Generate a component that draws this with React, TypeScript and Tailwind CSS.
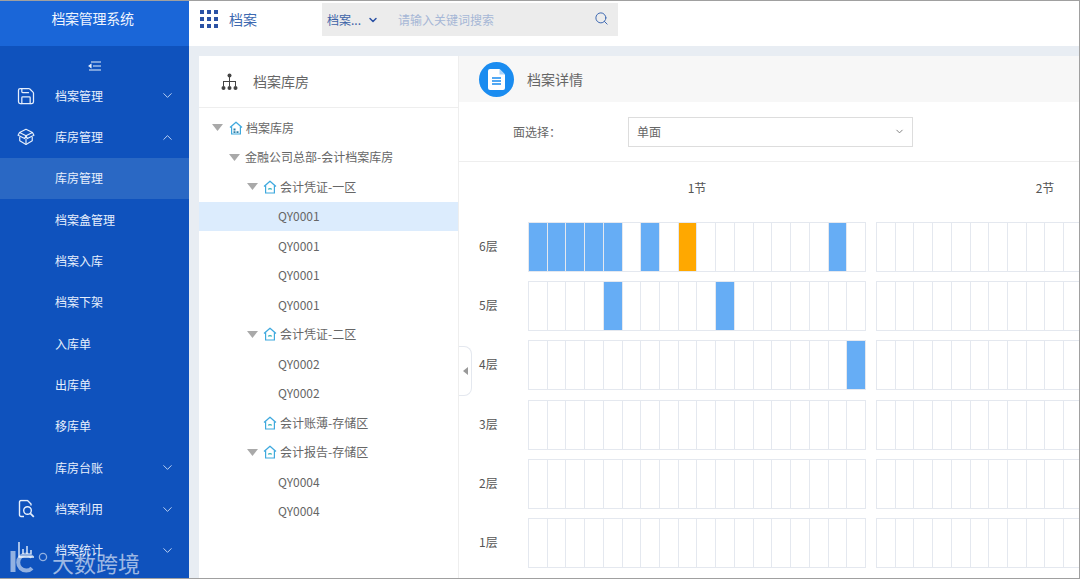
import { ChevronDown, ChevronUp, Save, Search } from "lucide-react";

const font = { fontFamily: '"Noto Sans CJK SC", "Liberation Sans", sans-serif' };

function BoxIcon() {
  return (
    <svg width="18" height="18" viewBox="0 0 17 17" fill="none" stroke="#e6effc" strokeWidth="1.1" strokeLinejoin="round">
      <path d="M8.5 1.2 14.6 4.2 8.5 7.4 2.4 4.2Z" />
      <path d="M2.4 4.2 1 6.8 7.2 10 8.5 7.4 9.8 10 16 6.8 14.6 4.2" />
      <path d="M2.6 8.4v3.7l5.9 3.4 5.9-3.4V8.4" />
      <path d="M8.5 10v5.5" />
    </svg>
  );
}

function FileFind() {
  return (
    <svg width="17" height="19" viewBox="0 0 17 19" fill="none" stroke="#e6effc" strokeWidth="1.4" strokeLinejoin="round">
      <path d="M6 17H3a1.5 1.5 0 0 1-1.5-1.5v-13A1.5 1.5 0 0 1 3 1h6.5L13 4.5V6" />
      <circle cx="9.5" cy="11" r="3.8" />
      <path d="M12.3 13.8 15.8 17.4" strokeWidth="1.7" />
    </svg>
  );
}

function ChartIcon() {
  return (
    <svg width="18" height="18" viewBox="0 0 18 18" fill="none" stroke="#e6effc" strokeWidth="1.4">
      <path d="M2 1v15h15" />
      <path d="M6 13V8M10 13V5M14 13V9" />
    </svg>
  );
}

function Tri({ wide }: { wide: boolean }) {
  return (
    <svg width="11" height="7" viewBox="0 0 11 7" className={wide ? "mr-[6px] shrink-0" : "mr-[5px] shrink-0"}>
      <path d="M0 0h11L5.5 7z" fill="#a9a9a9" />
    </svg>
  );
}

function Home({ store }: { store?: boolean }) {
  return (
    <svg width="14" height="14" viewBox="0 0 14 14" fill="none" className="shrink-0">
      <path d="M1 6.4 7 1.2l6 5.2" stroke="#3fa9de" strokeWidth="1.3" strokeLinejoin="round" />
      <path d="M2.6 5.6V13h8.8V5.6" stroke="#3fa9de" strokeWidth="1.2" />
      {store ? (
        <path d="M4.5 7.5h2v2h-2zM4.5 10.3h2v1.7h-2zM7.5 10.3h2v1.7h-2z" fill="#2d7fa8" />
      ) : (
        <path d="M5.2 9.4c1-1 2.6-1 3.6 0" stroke="#35b4b8" strokeWidth="1.3" />
      )}
    </svg>
  );
}

const nav = [
  { label: "档案管理", icon: <Save size={20} strokeWidth={1.5} color="#e6effc" />, arrow: "down" },
  { label: "库房管理", icon: <BoxIcon />, arrow: "up" },
  { label: "库房管理", active: true },
  { label: "档案盒管理" },
  { label: "档案入库" },
  { label: "档案下架" },
  { label: "入库单" },
  { label: "出库单" },
  { label: "移库单" },
  { label: "库房台账", arrow: "down" },
  { label: "档案利用", icon: <FileFind />, arrow: "down" },
  { label: "档案统计", icon: <ChartIcon />, arrow: "down" },
];

const tree = [
  { pad: "pl-[13px]", arrow: true, home: "store", text: "档案库房" },
  { pad: "pl-[30px]", arrow: true, text: "金融公司总部-会计档案库房" },
  { pad: "pl-[48px]", arrow: true, home: "plain", text: "会计凭证-一区" },
  { pad: "pl-[79px]", text: "QY0001", active: true },
  { pad: "pl-[79px]", text: "QY0001" },
  { pad: "pl-[79px]", text: "QY0001" },
  { pad: "pl-[79px]", text: "QY0001" },
  { pad: "pl-[48px]", arrow: true, home: "plain", text: "会计凭证-二区" },
  { pad: "pl-[79px]", text: "QY0002" },
  { pad: "pl-[79px]", text: "QY0002" },
  { pad: "pl-[64px]", home: "plain", text: "会计账薄-存储区" },
  { pad: "pl-[48px]", arrow: true, home: "plain", text: "会计报告-存储区" },
  { pad: "pl-[79px]", text: "QY0004" },
  { pad: "pl-[79px]", text: "QY0004" },
];

const floors: { label: string; blue: number[]; orange: number[] }[] = [
  { label: "6层", blue: [0, 1, 2, 3, 4, 6, 16], orange: [8] },
  { label: "5层", blue: [4, 10], orange: [] },
  { label: "4层", blue: [17], orange: [] },
  { label: "3层", blue: [], orange: [] },
  { label: "2层", blue: [], orange: [] },
  { label: "1层", blue: [], orange: [] },
];

const cells = Array.from({ length: 18 }, (_, i) => i);

function Bay({ blue = [], orange = [] }: { blue?: number[]; orange?: number[] }) {
  return (
    <div className="flex h-[50px] w-[338px] shrink-0 border border-[#e4e8ef] bg-white">
      {cells.map((i) => (
        <div
          key={i}
          className={
            "flex-1 border-r border-[#e4e8ef] last:border-r-0 " +
            (blue.includes(i) ? "bg-[#66adf5]" : orange.includes(i) ? "bg-[#ffa800]" : "")
          }
        />
      ))}
    </div>
  );
}

export default function App() {
  return (
    <div style={font} className="relative flex h-[579px] w-[1080px] overflow-hidden border-y border-r border-[#a0a0a0] bg-[#e8edf3]">
      <aside className="flex w-[189px] shrink-0 flex-col bg-[#0f52bd] text-[12px] text-[#e6effc]">
        <div className="flex h-[45px] items-center justify-center bg-[#1a66d8] pb-[10px] pr-[4px] text-[14px] tracking-[-0.3px] text-[#eef4fe]">
          档案管理系统
        </div>
        <div className="flex h-[26px] items-end justify-center pb-px">
          <svg width="13" height="10" viewBox="0 0 13 10" stroke="#e6effc" strokeWidth="1.1">
            <path d="M3 1h10M5 5h8M1 9h12" />
            <path d="M3 3.5 1 5l2 1.5z" fill="#e6effc" />
          </svg>
        </div>
        <nav className="flex flex-col pt-[3px]">
          {nav.map((n, i) => (
            <div
              key={i}
              className={"relative flex h-[41.35px] items-center pl-[55px] " + (n.active ? "bg-[#2a68c4]" : "")}
            >
              {n.icon && (
                <span className="absolute left-[16px] top-1/2 flex w-[20px] -translate-y-1/2 items-center justify-center">
                  {n.icon}
                </span>
              )}
              <span>{n.label}</span>
              {n.arrow === "down" && (
                <ChevronDown size={15} strokeWidth={1.5} color="#c4d7f5" className="absolute left-[160px]" />
              )}
              {n.arrow === "up" && (
                <ChevronUp size={15} strokeWidth={1.5} color="#c4d7f5" className="absolute left-[160px]" />
              )}
            </div>
          ))}
        </nav>
      </aside>

      <main className="flex min-w-0 flex-1 flex-col">
        <header className="flex h-[45px] shrink-0 items-start bg-white">
          <div className="ml-[11px] mt-[9px] grid grid-cols-3 gap-[3px]">
            {Array.from({ length: 9 }, (_, i) => (
              <span key={i} className="h-[4px] w-[4px] bg-[#2b52a5]" />
            ))}
          </div>
          <span className="ml-[11px] mt-[7px] text-[14px] leading-[22px] text-[#3d69b0]">档案</span>
          <div className="ml-[65px] mt-[2px] flex h-[33px] w-[296px] items-center bg-[#ececec] text-[12px]">
            <span className="ml-[5px] text-[#3d63a8]">档案...</span>
            <ChevronDown size={12} strokeWidth={3} color="#2b52a5" className="ml-[6px]" />
            <span className="ml-[19px] text-[#a6b7d6]">请输入关键词搜索</span>
            <Search size={15} strokeWidth={1.6} color="#3f6ab3" className="ml-auto mr-[9px] -translate-y-px" />
          </div>
        </header>

        <div className="ml-[10px] mt-[10px] flex min-h-0 flex-1">
          <section className="flex w-[259px] shrink-0 flex-col bg-white">
            <div className="flex h-[52px] shrink-0 items-center border-b border-[#eeeeee] pl-[22px] text-[14px] text-[#666666]">
              <svg width="17" height="18" viewBox="0 0 17 18" fill="#444444">
                <circle cx="8.5" cy="2.5" r="2" />
                <path d="M8 4h1v4h6v5h-1V9H9v4H8V9H3v4H2V8h6z" />
                <circle cx="2.5" cy="15" r="2" />
                <circle cx="8.5" cy="15" r="2" />
                <circle cx="14.5" cy="15" r="2" />
              </svg>
              <span className="ml-[15px]">档案库房</span>
            </div>
            <div className="pt-[5px] text-[12px] text-[#666666]">
              {tree.map((t, i) => (
                <div
                  key={i}
                  className={"flex h-[29.5px] items-center " + t.pad + (t.active ? " bg-[#dcecfd]" : "")}
                >
                  {t.arrow && <Tri wide={t.home === "store"} />}
                  {t.home && <Home store={t.home === "store"} />}
                  <span className={t.home ? "ml-[3px]" : ""}>{t.text}</span>
                </div>
              ))}
            </div>
          </section>

          <section className="relative min-w-0 flex-1 overflow-hidden border-l border-[#eeeeee] bg-white">
            <div className="flex h-[46px] items-center bg-[#f7f7f7] pl-[20px] text-[14px] text-[#666666]">
              <span className="flex h-[35px] w-[35px] items-center justify-center rounded-full bg-[#1a8cf0]">
                <svg width="17" height="21" viewBox="0 0 17 21">
                  <path d="M2 0h9.5L17 5.5V19a2 2 0 0 1-2 2H2a2 2 0 0 1-2-2V2a2 2 0 0 1 2-2z" fill="#ffffff" />
                  <path d="M11.5 0 17 5.5h-5.5z" fill="#a9d3fa" />
                  <path d="M4 9h9M4 12h9M4 15h9" stroke="#1a8cf0" strokeWidth="1.4" />
                </svg>
              </span>
              <span className="ml-[13px]">档案详情</span>
            </div>
            <div className="flex h-[60px] items-center border-b border-[#eeeeee] text-[12px] text-[#666666]">
              <span className="ml-[54px] w-[115px]">面选择：</span>
              <div className="flex h-[30px] w-[285px] items-center justify-between border border-[#dddddd] pl-[8px] pr-[7px]">
                <span>单面</span>
                <ChevronDown size={11} strokeWidth={2} color="#777777" />
              </div>
            </div>
            <div className="flex h-[60px] items-center pb-[9px] pl-[69px] text-[12px] text-[#555555]">
              <span className="w-[348px] shrink-0 pr-[10px] text-center">1节</span>
              <span className="w-[338px] shrink-0 text-center">2节</span>
            </div>
            <div className="flex flex-col gap-[9.2px]">
              {floors.map((f) => (
                <div key={f.label} className="flex items-center">
                  <span className="ml-[20px] w-[49px] shrink-0 -translate-y-px whitespace-nowrap text-[12px] text-[#555555]">{f.label}</span>
                  <div className="flex gap-[10px]">
                    <Bay blue={f.blue} orange={f.orange} />
                    <Bay />
                  </div>
                </div>
              ))}
            </div>
            <div className="absolute left-0 top-[290px] flex h-[50px] w-[13px] items-center justify-center rounded-r-[8px] border border-l-0 border-[#e4e8ef] bg-white">
              <svg width="5" height="8" viewBox="0 0 5 8"><path d="M5 0v8L0 4z" fill="#999999" /></svg>
            </div>
          </section>
        </div>
      </main>

      <div className="pointer-events-none absolute bottom-[3px] left-[10px] flex items-center text-[#ffffff]/60">
        <svg width="38" height="26" viewBox="0 0 38 26" fill="none" stroke="#ffffff" strokeOpacity="0.55">
          <path d="M3 2v21" strokeWidth="5" />
          <path d="M22 8a8 8 0 1 0 0 11" strokeWidth="4" />
          <circle cx="33" cy="8" r="3.6" strokeWidth="1.3" />
        </svg>
        <span className="ml-[4px] text-[22px] leading-[26px]">大数跨境</span>
      </div>
    </div>
  );
}
